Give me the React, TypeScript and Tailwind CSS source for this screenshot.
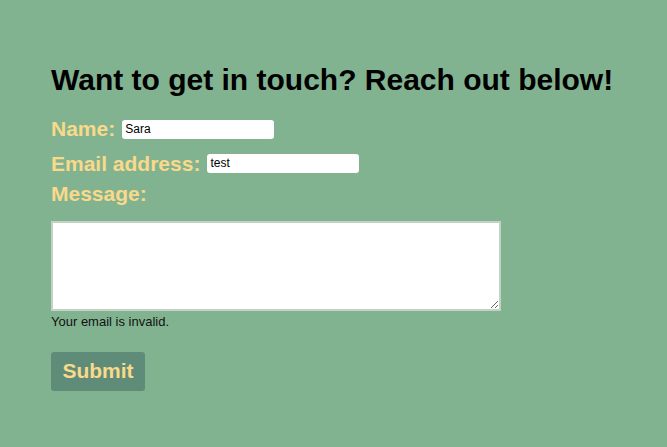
export default function App() {
  return (
    <div className="min-h-[447px] bg-[#82b391] px-[51px] pt-[60px] font-['Liberation_Sans',Arial,sans-serif]">
      <h1 className="mb-[12px] text-[30px] font-bold leading-[40px] text-black">
        Want to get in touch? Reach out below!
      </h1>
      <form className="flex flex-col" onSubmit={(e) => e.preventDefault()}>
        <label className="flex items-center text-[21px] font-bold leading-[34px] text-[#f9d98a]">
          Name:
          <input
            defaultValue="Sara"
            className="ml-[7px] h-[19px] w-[152px] rounded-[3px] bg-white px-[3px] text-[12px] font-normal text-black outline-none"
          />
        </label>
        <label className="flex items-center text-[21px] font-bold leading-[35px] text-[#f9d98a]">
          Email address:
          <input
            defaultValue="test"
            className="ml-[7px] h-[19px] w-[152px] rounded-[3px] bg-white px-[3px] text-[12px] font-normal text-black outline-none"
          />
        </label>
        <label className="text-[21px] font-bold leading-[26px] text-[#f9d98a]">Message:</label>
        <textarea className="mt-[14px] h-[90px] w-[450px] border-2 border-[#c4d2c6] bg-white" />
        <p className="mt-[2px] text-[13px] leading-[18px] text-[#111]">Your email is invalid.</p>
        <div className="mt-[21px]">
          <button
            type="submit"
            className="h-[39px] w-[94px] rounded-[3px] bg-[#5f8c78] pb-[2px] text-[21px] font-bold text-[#f9d98a]"
          >
            Submit
          </button>
        </div>
      </form>
    </div>
  );
}
